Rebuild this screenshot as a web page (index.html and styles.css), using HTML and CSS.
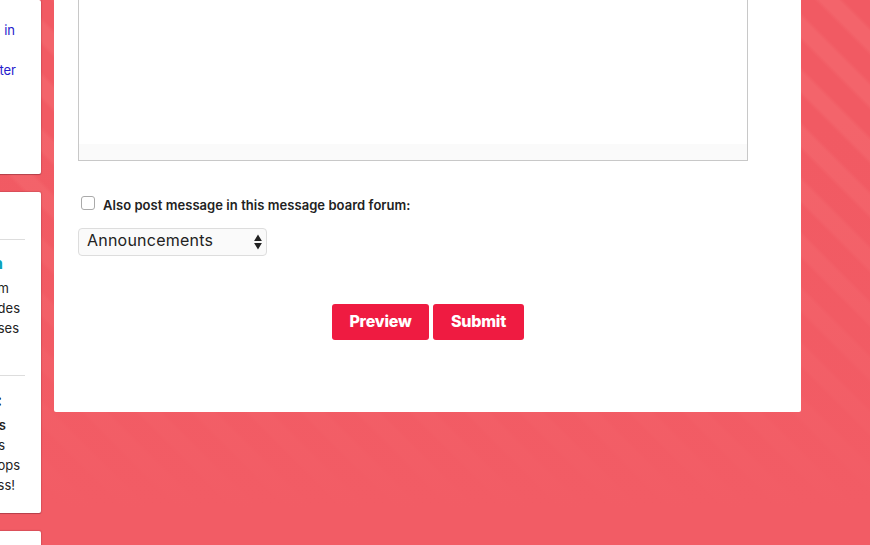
FILE: index.html
```html
<!DOCTYPE html>
<html lang="en">
<head>
<meta charset="utf-8">
<title>Message board</title>
<link rel="stylesheet" href="styles.css">
</head>
<body>
<div class="page">
  <aside class="sidebar">
    <section class="card card-links">
      <a class="line end-15">in</a>
      <a class="line end-16 link-second">ter</a>
    </section>
    <section class="card card-news">
      <hr>
      <h3 class="line heading teal">n</h3>
      <p class="line end-8">m</p>
      <p class="line end-20">des</p>
      <p class="line end-19">ses</p>
      <hr class="second">
      <h3 class="line heading colon">:</h3>
      <p class="line end-6 strong">s</p>
      <p class="line end-5">s</p>
      <p class="line end-20">ops</p>
      <p class="line end-15">ss!</p>
    </section>
    <section class="card card-last"></section>
  </aside>
  <main class="panel">
    <div class="editor"><div class="editor-status"></div></div>
    <label class="check-row"><input type="checkbox"><span>Also post message in this message board forum:</span></label>
    <div class="select"><span>Announcements</span>
      <svg width="8" height="16" viewBox="0 0 8 16"><path d="M4 0.5 7.9 7H0.1ZM0.1 9H7.9L4 15.5Z" fill="#222"/></svg>
    </div>
    <div class="actions"><button class="preview">Preview</button><button class="submit">Submit</button></div>
  </main>
</div>
</body>
</html>
```
FILE: styles.css
```css
* { box-sizing: border-box; }
body {
  margin: 0;
  height: 545px;
  overflow: hidden;
  font-family: Inter, "Liberation Sans", sans-serif;
  font-size: 13px;
  color: #222;
  background:
    linear-gradient(to bottom, rgba(242,92,101,0) 120px, #f25c65 510px),
    repeating-linear-gradient(45deg, #f3646b 0, #f3646b 13px, #f15a63 17px, #f15a63 34.6px, #f3646b 38.6px);
}
.page { display: flex; align-items: flex-start; height: 545px; gap: 13px; }
.sidebar { width: 41px; flex: none; display: flex; flex-direction: column; gap: 18px; }
.card {
  background: #fff;
  border-radius: 0 2px 2px 0;
  box-shadow: 0 0 1px 1px rgba(120,30,45,.2), 0 1px 0 rgba(100,30,40,.3);
  overflow: hidden;
}
.card-links { height: 174px; padding-top: 20px; }
.card-news { height: 321px; padding-top: 47px; }
.card-last { height: 40px; }
.line {
  display: flex;
  justify-content: flex-end;
  margin: 0;
  height: 20px;
  line-height: 20px;
  width: 20px;
  white-space: nowrap;
}
a.line { color: #2420cc; }
.link-second { margin-top: 20px; }
.end-5 { width: 5px; }
.end-6 { width: 6px; }
.end-8 { width: 9px; }
.end-15 { width: 15px; }
.end-16 { width: 16px; }
.end-19 { width: 19px; }
.strong { font-weight: 600; }
hr { border: 0; border-top: 1px solid #ddd; width: 25px; margin: 0 0 13px; }
hr.second { margin: 37px 0 14px; }
.heading { width: 3px; font-size: 16px; font-weight: 700; margin-bottom: 5px; }
.teal { color: #0da2b8; }
.colon { color: #111; width: 2px; }
.panel {
  width: 747px;
  height: 412px;
  padding: 0 24px;
  background: #fff;
  border-radius: 0 0 2px 2px;
}
.editor {
  width: 670px;
  height: 161px;
  border: 1px solid #c8c8c8;
  border-top: 0;
  display: flex;
  align-items: flex-end;
}
.editor-status { width: 100%; height: 16px; background: #fafafa; }
.check-row {
  display: flex;
  align-items: flex-start;
  gap: 8px;
  height: 32px;
  margin: 35px 0 0 3px;
  font-weight: 600;
  line-height: 18px;
}
.check-row span { letter-spacing: .05px; white-space: nowrap; }
.check-row input {
  appearance: none;
  width: 14px;
  height: 14px;
  margin: 0;
  border: 1px solid #aaa;
  border-radius: 3px;
  background: #fff;
}
.select {
  display: flex;
  justify-content: space-between;
  align-items: center;
  width: 189px;
  height: 28px;
  padding: 0 4px 0 8px;
  border: 1px solid #ddd;
  border-radius: 4px;
  background: #fafafa;
  font-size: 16px;
}
.select span { line-height: 20px; margin-bottom: 4px; letter-spacing: .22px; }
.actions { display: flex; gap: 4px; margin: 48px 0 0 254px; }
button {
  height: 36px;
  padding: 0 0 2px;
  border: 0;
  border-radius: 3px;
  background: #ef1b41;
  color: #fff;
  font: 800 16px Inter, "Liberation Sans", sans-serif;
  letter-spacing: -.2px;
}
.preview { width: 97px; }
.submit { width: 91px; }
```
